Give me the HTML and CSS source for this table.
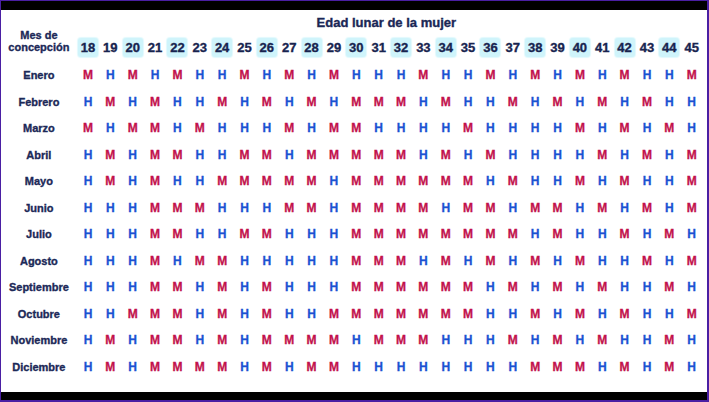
FILE: index.html
```html
<!DOCTYPE html>
<html lang="es">
<head>
<meta charset="utf-8">
<title>Edad lunar de la mujer</title>
<link rel="stylesheet" href="styles.css">
</head>
<body>
<div class="frame">
<div class="panel">
<div class="chart">
<div class="corner"><span>Mes de</span><span>concepción</span></div>
<div class="title">Edad lunar de la mujer</div>
<div class="num hl"><span>18</span></div><div class="num"><span>19</span></div><div class="num hl"><span>20</span></div><div class="num"><span>21</span></div><div class="num hl"><span>22</span></div><div class="num"><span>23</span></div><div class="num hl"><span>24</span></div><div class="num"><span>25</span></div><div class="num hl"><span>26</span></div><div class="num"><span>27</span></div><div class="num hl"><span>28</span></div><div class="num"><span>29</span></div><div class="num hl"><span>30</span></div><div class="num"><span>31</span></div><div class="num hl"><span>32</span></div><div class="num"><span>33</span></div><div class="num hl"><span>34</span></div><div class="num"><span>35</span></div><div class="num hl"><span>36</span></div><div class="num"><span>37</span></div><div class="num hl"><span>38</span></div><div class="num"><span>39</span></div><div class="num hl"><span>40</span></div><div class="num"><span>41</span></div><div class="num hl"><span>42</span></div><div class="num"><span>43</span></div><div class="num hl"><span>44</span></div><div class="num"><span>45</span></div>

<div class="lbl">Enero</div>
<span class="m">M</span><span class="h">H</span><span class="m">M</span><span class="h">H</span><span class="m">M</span><span class="h">H</span><span class="h">H</span><span class="m">M</span><span class="h">H</span><span class="m">M</span><span class="h">H</span><span class="m">M</span><span class="h">H</span><span class="h">H</span><span class="h">H</span><span class="m">M</span><span class="h">H</span><span class="h">H</span><span class="m">M</span><span class="h">H</span><span class="m">M</span><span class="h">H</span><span class="m">M</span><span class="h">H</span><span class="m">M</span><span class="h">H</span><span class="h">H</span><span class="m">M</span>

<div class="lbl">Febrero</div>
<span class="h">H</span><span class="m">M</span><span class="h">H</span><span class="m">M</span><span class="h">H</span><span class="h">H</span><span class="m">M</span><span class="h">H</span><span class="m">M</span><span class="h">H</span><span class="m">M</span><span class="h">H</span><span class="m">M</span><span class="m">M</span><span class="m">M</span><span class="h">H</span><span class="m">M</span><span class="h">H</span><span class="h">H</span><span class="m">M</span><span class="h">H</span><span class="m">M</span><span class="h">H</span><span class="m">M</span><span class="h">H</span><span class="m">M</span><span class="h">H</span><span class="h">H</span>

<div class="lbl">Marzo</div>
<span class="m">M</span><span class="h">H</span><span class="m">M</span><span class="m">M</span><span class="h">H</span><span class="m">M</span><span class="h">H</span><span class="h">H</span><span class="h">H</span><span class="m">M</span><span class="h">H</span><span class="m">M</span><span class="m">M</span><span class="h">H</span><span class="h">H</span><span class="h">H</span><span class="h">H</span><span class="m">M</span><span class="h">H</span><span class="h">H</span><span class="h">H</span><span class="h">H</span><span class="m">M</span><span class="h">H</span><span class="m">M</span><span class="h">H</span><span class="m">M</span><span class="h">H</span>

<div class="lbl">Abril</div>
<span class="h">H</span><span class="m">M</span><span class="h">H</span><span class="m">M</span><span class="m">M</span><span class="h">H</span><span class="h">H</span><span class="m">M</span><span class="m">M</span><span class="h">H</span><span class="m">M</span><span class="m">M</span><span class="m">M</span><span class="m">M</span><span class="m">M</span><span class="h">H</span><span class="m">M</span><span class="h">H</span><span class="m">M</span><span class="h">H</span><span class="h">H</span><span class="h">H</span><span class="h">H</span><span class="m">M</span><span class="h">H</span><span class="m">M</span><span class="h">H</span><span class="m">M</span>

<div class="lbl">Mayo</div>
<span class="h">H</span><span class="m">M</span><span class="h">H</span><span class="m">M</span><span class="h">H</span><span class="h">H</span><span class="m">M</span><span class="m">M</span><span class="m">M</span><span class="m">M</span><span class="m">M</span><span class="h">H</span><span class="m">M</span><span class="m">M</span><span class="m">M</span><span class="m">M</span><span class="m">M</span><span class="m">M</span><span class="h">H</span><span class="m">M</span><span class="h">H</span><span class="h">H</span><span class="m">M</span><span class="h">H</span><span class="m">M</span><span class="h">H</span><span class="h">H</span><span class="m">M</span>

<div class="lbl">Junio</div>
<span class="h">H</span><span class="h">H</span><span class="h">H</span><span class="m">M</span><span class="m">M</span><span class="m">M</span><span class="h">H</span><span class="h">H</span><span class="h">H</span><span class="m">M</span><span class="m">M</span><span class="h">H</span><span class="m">M</span><span class="m">M</span><span class="m">M</span><span class="m">M</span><span class="h">H</span><span class="m">M</span><span class="m">M</span><span class="h">H</span><span class="m">M</span><span class="m">M</span><span class="h">H</span><span class="m">M</span><span class="h">H</span><span class="m">M</span><span class="h">H</span><span class="m">M</span>

<div class="lbl">Julio</div>
<span class="h">H</span><span class="h">H</span><span class="h">H</span><span class="m">M</span><span class="m">M</span><span class="h">H</span><span class="h">H</span><span class="m">M</span><span class="m">M</span><span class="h">H</span><span class="h">H</span><span class="h">H</span><span class="m">M</span><span class="m">M</span><span class="m">M</span><span class="m">M</span><span class="m">M</span><span class="m">M</span><span class="m">M</span><span class="m">M</span><span class="h">H</span><span class="m">M</span><span class="h">H</span><span class="h">H</span><span class="m">M</span><span class="h">H</span><span class="m">M</span><span class="h">H</span>

<div class="lbl">Agosto</div>
<span class="h">H</span><span class="h">H</span><span class="h">H</span><span class="m">M</span><span class="h">H</span><span class="m">M</span><span class="m">M</span><span class="h">H</span><span class="h">H</span><span class="h">H</span><span class="h">H</span><span class="h">H</span><span class="m">M</span><span class="m">M</span><span class="m">M</span><span class="h">H</span><span class="m">M</span><span class="h">H</span><span class="m">M</span><span class="h">H</span><span class="m">M</span><span class="h">H</span><span class="m">M</span><span class="h">H</span><span class="h">H</span><span class="m">M</span><span class="h">H</span><span class="m">M</span>

<div class="lbl">Septiembre</div>
<span class="h">H</span><span class="h">H</span><span class="h">H</span><span class="m">M</span><span class="m">M</span><span class="h">H</span><span class="m">M</span><span class="h">H</span><span class="m">M</span><span class="h">H</span><span class="h">H</span><span class="h">H</span><span class="m">M</span><span class="m">M</span><span class="m">M</span><span class="m">M</span><span class="m">M</span><span class="m">M</span><span class="h">H</span><span class="m">M</span><span class="h">H</span><span class="m">M</span><span class="h">H</span><span class="m">M</span><span class="h">H</span><span class="h">H</span><span class="m">M</span><span class="h">H</span>

<div class="lbl">Octubre</div>
<span class="h">H</span><span class="h">H</span><span class="m">M</span><span class="m">M</span><span class="m">M</span><span class="h">H</span><span class="m">M</span><span class="h">H</span><span class="m">M</span><span class="h">H</span><span class="h">H</span><span class="m">M</span><span class="m">M</span><span class="m">M</span><span class="m">M</span><span class="m">M</span><span class="m">M</span><span class="m">M</span><span class="h">H</span><span class="h">H</span><span class="m">M</span><span class="h">H</span><span class="m">M</span><span class="h">H</span><span class="m">M</span><span class="h">H</span><span class="h">H</span><span class="m">M</span>

<div class="lbl">Noviembre</div>
<span class="h">H</span><span class="m">M</span><span class="h">H</span><span class="m">M</span><span class="m">M</span><span class="h">H</span><span class="m">M</span><span class="h">H</span><span class="m">M</span><span class="m">M</span><span class="m">M</span><span class="m">M</span><span class="h">H</span><span class="m">M</span><span class="m">M</span><span class="m">M</span><span class="h">H</span><span class="h">H</span><span class="h">H</span><span class="m">M</span><span class="h">H</span><span class="m">M</span><span class="h">H</span><span class="m">M</span><span class="h">H</span><span class="h">H</span><span class="m">M</span><span class="h">H</span>

<div class="lbl">Diciembre</div>
<span class="h">H</span><span class="m">M</span><span class="h">H</span><span class="m">M</span><span class="m">M</span><span class="m">M</span><span class="m">M</span><span class="h">H</span><span class="m">M</span><span class="h">H</span><span class="m">M</span><span class="m">M</span><span class="h">H</span><span class="h">H</span><span class="h">H</span><span class="h">H</span><span class="h">H</span><span class="h">H</span><span class="h">H</span><span class="h">H</span><span class="m">M</span><span class="m">M</span><span class="m">M</span><span class="h">H</span><span class="m">M</span><span class="h">H</span><span class="m">M</span><span class="h">H</span>
</div>
</div>
</div>
</body>
</html>
```

FILE: styles.css
```css
* {
  box-sizing: border-box;
}

html,
body {
  margin: 0;
  padding: 0;
}

body {
  background: #4a1fa3;
  font-family: "Liberation Sans", Arial, sans-serif;
  height: 402px;
  overflow: hidden;
}

.frame {
  margin: 1px 2px 2px 1px;
  height: 399px;
  background: #000;
  padding: 9px 0 8px;
}

.panel {
  background: #fff;
  height: 382px;
}

.chart {
  display: grid;
  grid-template-columns: 75.8px repeat(28, 22.37px);
  grid-template-rows: 24.2px 27.5px repeat(12, 26.55px);
}

.title {
  grid-column: 2 / -1;
  grid-row: 1;
  display: flex;
  align-items: center;
  justify-content: center;
  padding-right: 7px;
  font-size: 13px;
  font-weight: 700;
  color: #1a2756;
  -webkit-text-stroke: 0.35px #1a2756;
}

.corner {
  grid-column: 1;
  grid-row: 1 / 3;
  display: flex;
  flex-direction: column;
  justify-content: flex-end;
  align-items: center;
  padding-bottom: 8px;
  font-size: 11px;
  line-height: 12.5px;
  font-weight: 700;
  color: #1c2958;
  -webkit-text-stroke: 0.35px #1c2958;
}

.num {
  display: flex;
  align-items: center;
  justify-content: center;
  font-size: 13px;
  font-weight: 700;
  color: #18244f;
  -webkit-text-stroke: 0.35px #18244f;
}

.num span {
  width: 20px;
  height: 19px;
  display: flex;
  align-items: center;
  justify-content: center;
  border-radius: 3px;
}

.num.hl span {
  background: #cff4fb;
  box-shadow: 0 0 1px 1px #e2f9fd;
}

.lbl {
  display: flex;
  align-items: center;
  justify-content: center;
  font-size: 11px;
  font-weight: 700;
  color: #1c2958;
  -webkit-text-stroke: 0.35px #1c2958;
}

.h,
.m {
  display: flex;
  align-items: center;
  justify-content: center;
  font-size: 12px;
  font-weight: 700;
}

.h {
  color: #1a52d2;
  -webkit-text-stroke: 0.3px #1a52d2;
}

.m {
  color: #c2114c;
  -webkit-text-stroke: 0.3px #c2114c;
}
```
